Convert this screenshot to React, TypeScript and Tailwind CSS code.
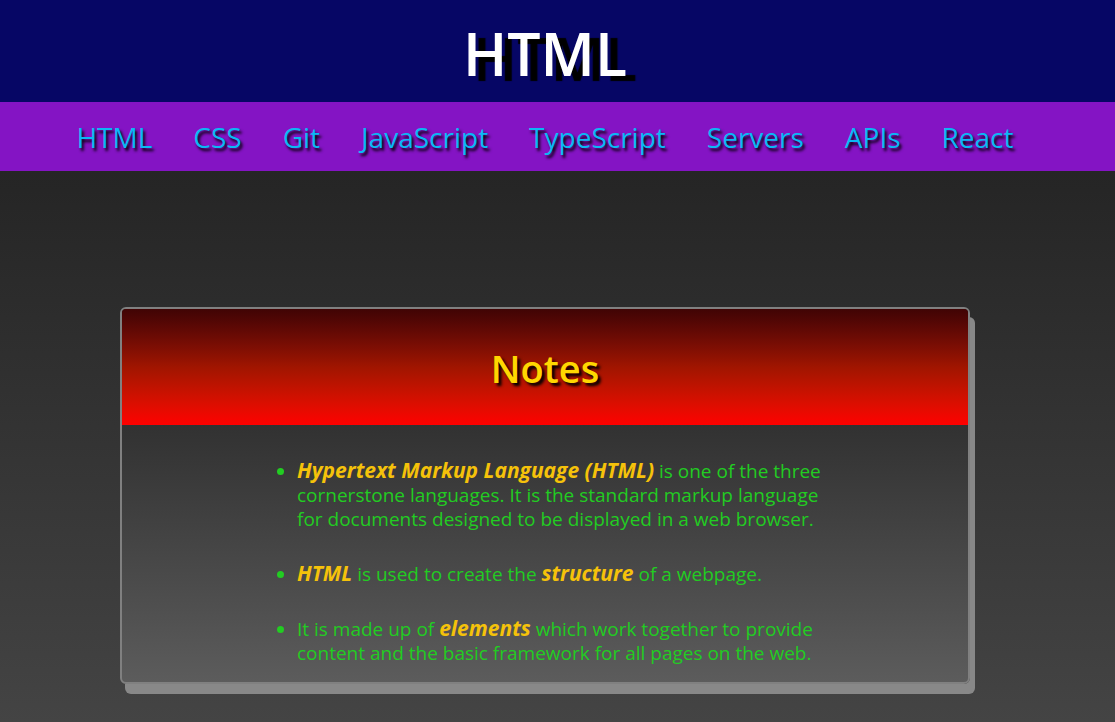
import type { ReactNode } from "react";

const links = ["HTML", "CSS", "Git", "JavaScript", "TypeScript", "Servers", "APIs", "React"];

function Term({ children }: { children: ReactNode }) {
  return <em className="text-[21px] leading-none font-bold text-[#f5c20a]">{children}</em>;
}

export default function App() {
  return (
    <div className="flex min-h-screen flex-col bg-[#252525] font-['Open_Sans','Noto_Sans',sans-serif]">
      <header className="bg-[#060665] pt-3 pr-[25px] pb-2">
        <h1 className="text-center text-[59px] leading-[82px] font-semibold text-white [text-shadow:10px_5px_1px_#000]">
          HTML
        </h1>
      </header>
      <nav aria-label="Topics" className="bg-[#8414c4] pt-[13px] pr-[25px] pb-[11px]">
        <ul className="flex flex-wrap justify-center gap-x-[41px]">
          {links.map((name) => (
            <li key={name}>
              <a
                href={`#${name.toLowerCase()}`}
                className="block text-[28px] leading-[45px] text-[#0ab8f5] [text-shadow:2px_3px_3px_#000]"
              >
                {name}
              </a>
            </li>
          ))}
        </ul>
      </nav>
      <main className="grow bg-linear-to-b from-[#252525] to-[#444444] pt-34 pr-[25px] pb-9">
        <section className="mx-auto w-full max-w-[850px] overflow-hidden rounded-md border-2 border-[#808080] bg-linear-to-b from-[#202020] to-[#5c5c5c] shadow-[5px_10px_0_#888888]">
          <h2 className="bg-linear-to-b from-[#400404] via-[#a01500] to-[#ff0000] pt-[29px] pb-[27px] text-center text-[38px] leading-[60px] font-semibold text-[#ffd700] [text-shadow:3px_3px_3px_#000]">
            Notes
          </h2>
          <ul className="mx-auto flex max-w-[592px] list-disc flex-col gap-[31px] pt-[34px] pb-[17px] pl-12 text-[19px] leading-6 text-[#22cc22]">
            <li>
              <Term>Hypertext Markup Language (HTML)</Term> is one of the three cornerstone languages. It is the
              standard markup language for documents designed to be displayed in a web browser.
            </li>
            <li>
              <Term>HTML</Term> is used to create the <Term>structure</Term> of a webpage.
            </li>
            <li>
              It is made up of <Term>elements</Term> which work together to provide content and the basic framework
              for all pages on the web.
            </li>
          </ul>
        </section>
      </main>
    </div>
  );
}
